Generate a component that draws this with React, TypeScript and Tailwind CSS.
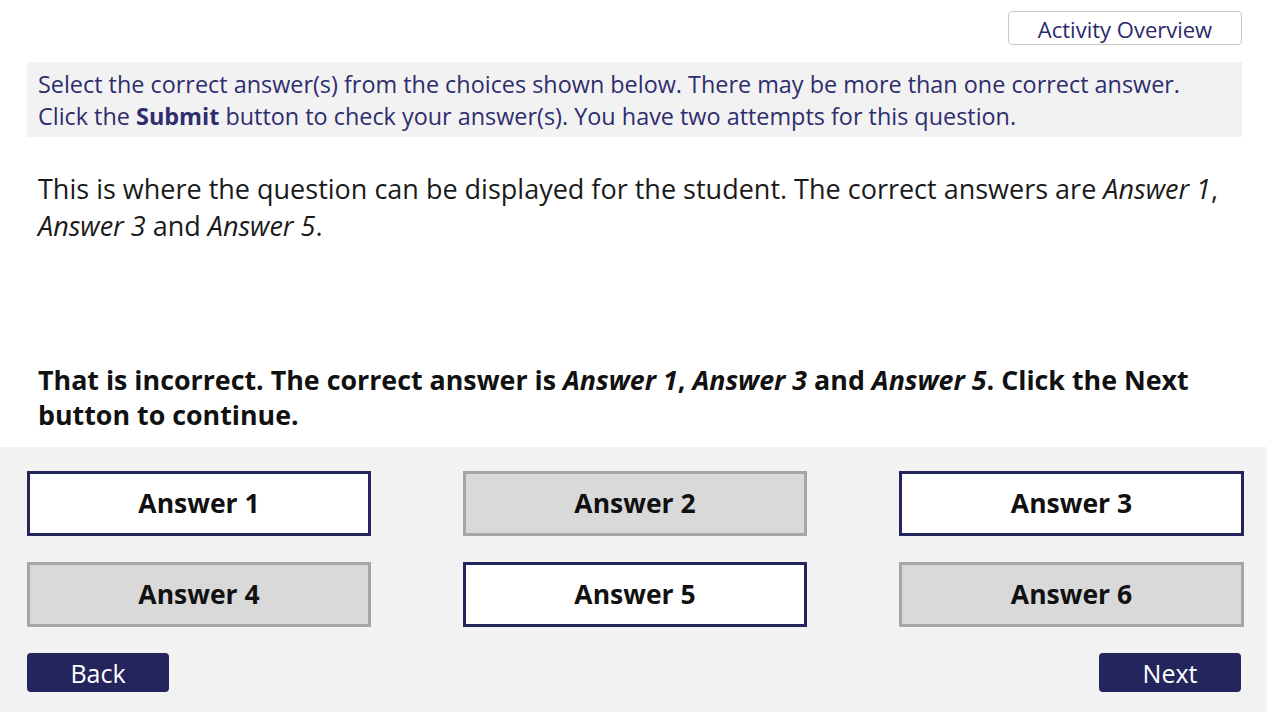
import { useState } from "react";

const answers = [
  { label: "Answer 1", correct: true },
  { label: "Answer 2", correct: false },
  { label: "Answer 3", correct: true },
  { label: "Answer 4", correct: false },
  { label: "Answer 5", correct: true },
  { label: "Answer 6", correct: false },
];

function App() {
  const [selected] = useState<number[]>([0, 2, 4]);

  return (
    <div
      className="w-[1267px] h-[712px] bg-white flex flex-col overflow-hidden"
      style={{ fontFamily: '"Open Sans", "Noto Sans", sans-serif' }}
    >
      <div className="flex-1 pl-[27px] pr-[25px]">
        <div className="flex justify-end pt-[11px]">
          <button className="w-[234px] h-[34px] border border-[#c8c8c8] rounded-[4px] bg-white text-[22px] leading-none text-[#2a2a6a] pt-[1px]">
            Activity Overview
          </button>
        </div>

        <div className="mt-[17px] h-[75px] bg-[#f2f2f2] px-[11px] pt-[6px] text-[23.4px] leading-[32px] text-[#2e2d6e]">
          <p>
            Select the correct answer(s) from the choices shown below. There may be more than one correct answer.
          </p>
          <p>
            Click the <b>Submit</b> button to check your answer(s). You have two attempts for this question.
          </p>
        </div>

        <p className="mt-[33px] px-[11px] text-[27px] leading-[37px] text-[#1a1a1a]">
          This is where the question can be displayed for the student. The correct answers are{" "}
          <i>Answer 1</i>, <i>Answer 3</i> and <i>Answer 5</i>.
        </p>

        <p className="mt-[118px] px-[11px] text-[26.8px] leading-[35px] font-bold text-[#111]">
          That is incorrect. The correct answer is <i>Answer 1</i>, <i>Answer 3</i> and{" "}
          <i>Answer 5</i>. Click the Next button to continue.
        </p>
      </div>

      <div className="h-[265px] bg-[#f2f2f2] pl-[27px] pt-[24px]">
        <div className="grid grid-cols-[344px_344px_345px] gap-x-[92px] gap-y-[26px]">
          {answers.map((a, i) => (
            <div
              key={a.label}
              className={
                selected.includes(i)
                  ? "h-[65px] flex items-center justify-center border-[3px] border-[#25255e] bg-white text-[26.5px] font-bold text-[#111]"
                  : "h-[65px] flex items-center justify-center border-[3px] border-[#a6a6a6] bg-[#d9d9d9] text-[26.5px] font-bold text-[#111]"
              }
            >
              {a.label}
            </div>
          ))}
        </div>

        <div className="flex justify-between mt-[26px] pr-[26px]">
          <button className="w-[142px] h-[39px] rounded-[4px] bg-[#25255e] text-white text-[25px] leading-none pt-[2px]">
            Back
          </button>
          <button className="w-[142px] h-[39px] rounded-[4px] bg-[#25255e] text-white text-[25px] leading-none pt-[2px]">
            Next
          </button>
        </div>
      </div>
    </div>
  );
}

export default App;
